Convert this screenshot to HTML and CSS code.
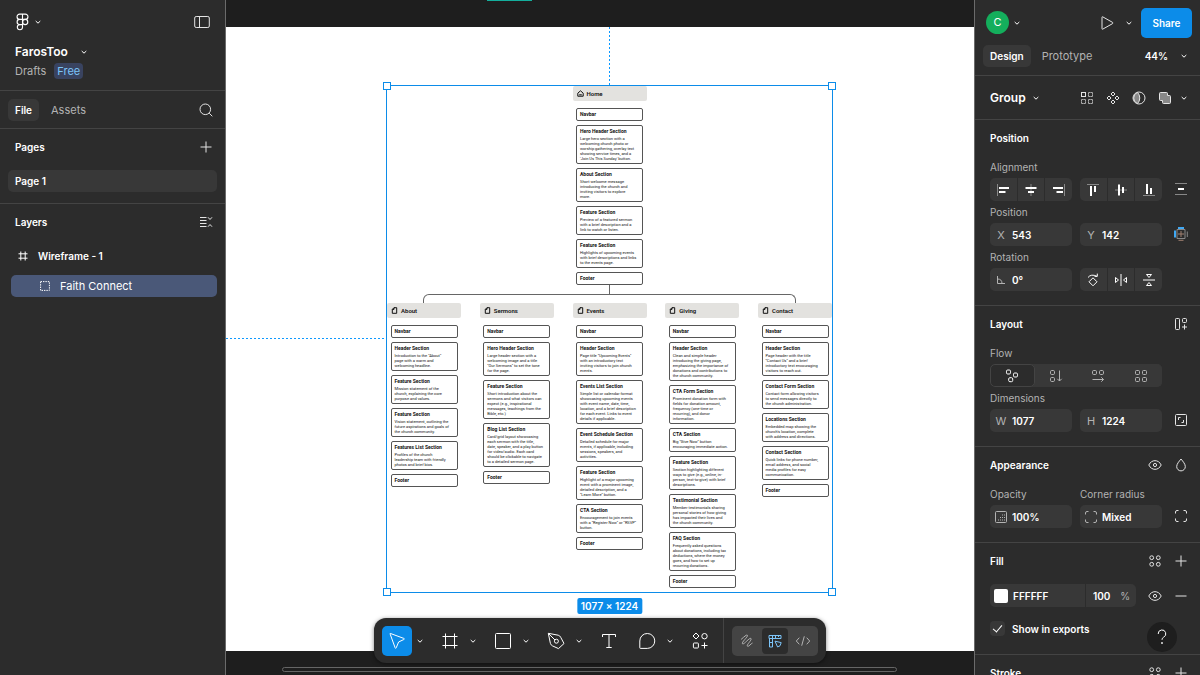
FILE: index.html
```html
<!DOCTYPE html>
<html lang="en">
<head>
<meta charset="utf-8">
<meta name="viewport" content="width=device-width, initial-scale=1">
<title>FarosToo</title>
<link rel="stylesheet" href="styles.css">
</head>
<body>

<!-- shared icons -->
<svg class="defs">
  <symbol id="chev" viewBox="0 0 8 8"><path d="M1.7 3 L4 5.2 L6.3 3" /></symbol>
  <symbol id="plus" viewBox="0 0 14 14"><path d="M7 1.5 V12.5 M1.5 7 H12.5" /></symbol>
  <symbol id="eye" viewBox="0 0 14 14"><path d="M.8 7 C3.5 1.2 10.5 1.2 13.2 7 C10.5 12.8 3.5 12.8 .8 7 Z" /><circle cx="7" cy="7" r="1.6" /></symbol>
  <symbol id="dots" viewBox="0 0 14 14"><circle cx="3.7" cy="3.7" r="1.9" /><circle cx="10.3" cy="3.7" r="1.9" /><circle cx="3.7" cy="10.3" r="1.9" /><circle cx="10.3" cy="10.3" r="1.9" /></symbol>
  <symbol id="corners" viewBox="0 0 14 14"><path d="M1.5 4.5 V3 Q1.5 1.5 3 1.5 H4.5 M9.5 1.5 H11 Q12.5 1.5 12.5 3 V4.5 M12.5 9.5 V11 Q12.5 12.5 11 12.5 H9.5 M4.5 12.5 H3 Q1.5 12.5 1.5 11 V9.5" /></symbol>
  <symbol id="page" viewBox="0 0 7 7"><path d="M3 .7 H5.7 V6.3 H1.3 V2.4 Z M3 .7 V2.4 H1.3" /></symbol>
</svg>

<div class="app">

<nav class="left">
  <div class="file_head">
    <div class="row">
      <button class="menu" aria-label="Main menu">
        <svg class="logo" viewBox="0 0 12 16"><path d="M6 1 H3.5 a2.3 2.3 0 0 0 0 4.7 H6 Z M6 1 H8.5 a2.3 2.3 0 0 1 0 4.7 H6 Z M6 5.7 H3.5 a2.3 2.3 0 0 0 0 4.6 H6 Z M3.5 10.3 a2.3 2.3 0 1 0 2.5 2.4 V10.3 Z" /><circle cx="8.4" cy="8" r="2.3" /></svg>
        <svg class="chev"><use href="#chev" /></svg>
      </button>
      <button class="ic" aria-label="Toggle panel"><svg class="i16" viewBox="0 0 16 16"><rect x=".7" y="2.5" width="14.6" height="11" rx="1.5" /><path d="M5.5 2.5 V13.5" /></svg></button>
    </div>
    <button class="file_name">FarosToo <svg class="chev"><use href="#chev" /></svg></button>
    <div class="where"><a href="#">Drafts</a><span class="badge">Free</span></div>
  </div>
  <div class="tabs">
    <button class="tab on">File</button>
    <button class="tab">Assets</button>
    <button class="ic push" aria-label="Search"><svg class="i14" viewBox="0 0 14 14"><circle cx="6.3" cy="6.3" r="5.3" /><path d="M10.2 10.2 L13.3 13.3" /></svg></button>
  </div>
  <section class="pages">
    <div class="row head">
      <h2>Pages</h2>
      <button class="ic" aria-label="Add page"><svg class="i14"><use href="#plus" /></svg></button>
    </div>
    <a class="page_row" href="#">Page 1</a>
  </section>
  <section class="layers">
    <div class="row head">
      <h2>Layers</h2>
      <button class="ic" aria-label="Collapse layers"><svg class="i14" viewBox="0 0 14 14"><path d="M1 2.5 H7.5 M1 5.5 H7.5 M1 8.5 H7.5 M1 11.5 H7.5 M9 2.3 L11 4.5 L13 2.3 M9 11.7 L11 9.5 L13 11.7" /></svg></button>
    </div>
    <a class="layer" href="#"><svg class="i10" viewBox="0 0 10 10"><path d="M2.8 .5 V9.5 M7.2 .5 V9.5 M.5 2.8 H9.5 M.5 7.2 H9.5" /></svg>Wireframe - 1</a>
    <a class="layer child" href="#"><svg class="i10" viewBox="0 0 10 10"><rect x=".6" y=".6" width="8.8" height="8.8" stroke-dasharray="1.4 1" /></svg>Faith Connect</a>
  </section>
</nav>

<main class="canvas">
  <div class="artboard"></div>
  <div class="teal"></div>
  <div class="guide_v"></div>
  <div class="guide_h"></div>

  <div class="group">
    <div class="col home">
      <h2 class="node"><svg viewBox="0 0 7 7"><path d="M.8 3.2 L3.5 .8 L6.2 3.2 V6.2 H.8 Z M2.2 4.8 H4.8" /></svg>Home</h2>
      <div class="box"><h3>Navbar</h3></div>
      <div class="box"><h3>Hero Header Section</h3><p>Large hero section with a<br>welcoming church photo or<br>worship gathering, overlay text<br>showing service times, and a<br>'Join Us This Sunday' button.</p></div>
      <div class="box"><h3>About Section</h3><p>Short welcome message<br>introducing the church and<br>inviting visitors to explore<br>more.</p></div>
      <div class="box"><h3>Feature Section</h3><p>Preview of a featured sermon<br>with a brief description and a<br>link to watch or listen.</p></div>
      <div class="box"><h3>Feature Section</h3><p>Highlights of upcoming events<br>with brief descriptions and links<br>to the events page.</p></div>
      <div class="box"><h3>Footer</h3></div>
    </div>
    <div class="stem"></div>
    <div class="branch"></div>
    <div class="cols">
      <div class="col">
        <h2 class="node"><svg><use href="#page" /></svg>About</h2>
        <div class="box"><h3>Navbar</h3></div>
        <div class="box"><h3>Header Section</h3><p>Introduction to the "About"<br>page with a warm and<br>welcoming headline.</p></div>
        <div class="box"><h3>Feature Section</h3><p>Mission statement of the<br>church, explaining the core<br>purpose and values.</p></div>
        <div class="box"><h3>Feature Section</h3><p>Vision statement, outlining the<br>future aspirations and goals of<br>the church community.</p></div>
        <div class="box"><h3>Features List Section</h3><p>Profiles of the church<br>leadership team with friendly<br>photos and brief bios.</p></div>
        <div class="box"><h3>Footer</h3></div>
      </div>
      <div class="col">
        <h2 class="node"><svg><use href="#page" /></svg>Sermons</h2>
        <div class="box"><h3>Navbar</h3></div>
        <div class="box"><h3>Hero Header Section</h3><p>Large header section with a<br>welcoming image and a title<br>"Our Sermons" to set the tone<br>for the page.</p></div>
        <div class="box"><h3>Feature Section</h3><p>Short introduction about the<br>sermons and what visitors can<br>expect (e.g., inspirational<br>messages, teachings from the<br>Bible, etc.)</p></div>
        <div class="box"><h3>Blog List Section</h3><p>Card/grid layout showcasing<br>each sermon with the title,<br>date, speaker, and a play button<br>for video/audio. Each card<br>should be clickable to navigate<br>to a detailed sermon page.</p></div>
        <div class="box"><h3>Footer</h3></div>
      </div>
      <div class="col">
        <h2 class="node"><svg><use href="#page" /></svg>Events</h2>
        <div class="box"><h3>Navbar</h3></div>
        <div class="box"><h3>Header Section</h3><p>Page title "Upcoming Events"<br>with an introductory text<br>inviting visitors to join church<br>events.</p></div>
        <div class="box"><h3>Events List Section</h3><p>Simple list or calendar format<br>showcasing upcoming events<br>with event name, date, time,<br>location, and a brief description<br>for each event. Links to event<br>details if applicable.</p></div>
        <div class="box"><h3>Event Schedule Section</h3><p>Detailed schedule for major<br>events, if applicable, including<br>sessions, speakers, and<br>activities.</p></div>
        <div class="box"><h3>Feature Section</h3><p>Highlight of a major upcoming<br>event with a prominent image,<br>detailed description, and a<br>"Learn More" button.</p></div>
        <div class="box"><h3>CTA Section</h3><p>Encouragement to join events<br>with a "Register Now" or "RSVP"<br>button.</p></div>
        <div class="box"><h3>Footer</h3></div>
      </div>
      <div class="col">
        <h2 class="node"><svg><use href="#page" /></svg>Giving</h2>
        <div class="box"><h3>Navbar</h3></div>
        <div class="box"><h3>Header Section</h3><p>Clean and simple header<br>introducing the giving page,<br>emphasizing the importance of<br>donations and contributions to<br>the church community.</p></div>
        <div class="box"><h3>CTA Form Section</h3><p>Prominent donation form with<br>fields for donation amount,<br>frequency (one-time or<br>recurring), and donor<br>information.</p></div>
        <div class="box"><h3>CTA Section</h3><p>Big "Give Now" button<br>encouraging immediate action.</p></div>
        <div class="box"><h3>Feature Section</h3><p>Section highlighting different<br>ways to give (e.g., online, in-<br>person, text-to-give) with brief<br>descriptions.</p></div>
        <div class="box"><h3>Testimonial Section</h3><p>Member testimonials sharing<br>personal stories of how giving<br>has impacted their lives and<br>the church community.</p></div>
        <div class="box"><h3>FAQ Section</h3><p>Frequently asked questions<br>about donations, including tax<br>deductions, where the money<br>goes, and how to set up<br>recurring donations.</p></div>
        <div class="box"><h3>Footer</h3></div>
      </div>
      <div class="col">
        <h2 class="node"><svg><use href="#page" /></svg>Contact</h2>
        <div class="box"><h3>Navbar</h3></div>
        <div class="box"><h3>Header Section</h3><p>Page header with the title<br>"Contact Us" and a brief<br>introductory text encouraging<br>visitors to reach out.</p></div>
        <div class="box"><h3>Contact Form Section</h3><p>Contact form allowing visitors<br>to send messages directly to<br>the church administration.</p></div>
        <div class="box"><h3>Locations Section</h3><p>Embedded map showing the<br>church's location, complete<br>with address and directions.</p></div>
        <div class="box"><h3>Contact Section</h3><p>Quick links for phone number,<br>email address, and social<br>media profiles for easy<br>communication.</p></div>
        <div class="box"><h3>Footer</h3></div>
      </div>
    </div>
    <i class="handle tl"></i><i class="handle tr"></i><i class="handle bl"></i><i class="handle br"></i>
    <span class="size">1077 × 1224</span>
  </div>

  <div class="scrollbar"></div>

  <div class="toolbar">
    <div class="tool">
      <button class="tb active" aria-label="Move"><svg viewBox="0 0 20 20"><path d="M3.2 3.2 Q2.5 2.2 3.8 2.6 L16.8 7.4 Q18 7.9 16.8 8.5 L11.6 11 L9.2 16.8 Q8.6 18 8.1 16.7 Z" /></svg></button>
      <button class="more" aria-label="Move tools"><svg class="chev"><use href="#chev" /></svg></button>
    </div>
    <div class="tool">
      <button class="tb" aria-label="Frame"><svg viewBox="0 0 20 20"><path d="M5.5 2.5 V17.5 M14.5 2.5 V17.5 M2.5 5.5 H17.5 M2.5 14.5 H17.5" /></svg></button>
      <button class="more" aria-label="Region tools"><svg class="chev"><use href="#chev" /></svg></button>
    </div>
    <div class="tool">
      <button class="tb" aria-label="Rectangle"><svg viewBox="0 0 20 20"><rect x="2.5" y="2.5" width="15" height="15" rx="1" /></svg></button>
      <button class="more" aria-label="Shape tools"><svg class="chev"><use href="#chev" /></svg></button>
    </div>
    <div class="tool">
      <button class="tb" aria-label="Pen"><svg viewBox="0 0 20 20"><path d="M2.3 2.3 L12.2 4.2 Q14 4.7 14.7 6.3 L18 12.5 L12.5 17.6 L6.5 14.9 Q4.9 14.1 4.4 12.4 Z M2.5 2.5 L9 9" /><circle cx="10.4" cy="10.2" r="2" /></svg></button>
      <button class="more" aria-label="Creation tools"><svg class="chev"><use href="#chev" /></svg></button>
    </div>
    <button class="tb" aria-label="Text"><svg viewBox="0 0 20 20"><path d="M3.5 6 V3.5 H16.5 V6 M10 3.5 V16.5 M7.3 16.5 H12.7" /></svg></button>
    <div class="tool">
      <button class="tb" aria-label="Comment"><svg viewBox="0 0 20 20"><path d="M10.3 2.5 a7.4 7.4 0 1 1 0 14.9 H3.4 Q2.8 17.4 2.8 16.8 V10 a7.4 7.4 0 0 1 7.5 -7.5 Z" /></svg></button>
      <button class="more" aria-label="Comment tools"><svg class="chev"><use href="#chev" /></svg></button>
    </div>
    <button class="tb" aria-label="Actions"><svg viewBox="0 0 20 20"><path d="M6 2 L9 5 L6 8 L3 5 Z M14.5 11.5 V17.5 M11.5 14.5 H17.5" /><circle cx="14.5" cy="5.2" r="2.7" /><rect x="3.4" y="12" width="5" height="5" rx=".8" /></svg></button>
    <div class="sep"></div>
    <div class="modes">
      <button aria-label="Draw"><svg viewBox="0 0 16 16"><path d="M2 6.5 C5 4 8 .8 8.5 2.5 C9 4 2 9.5 3.5 10.8 C5 12 10.5 4 12 5.5 C13.2 7 7 12 8.5 13.2 C9.8 14 12 10.5 13.5 10" /></svg></button>
      <button class="on" aria-label="Design"><svg viewBox="0 0 16 16"><path d="M2 2.5 H14 V5.5 H2 Z M2.5 5.5 V14 H5.5 V2.5 M8.5 2.5 V5.5 M11.5 2.5 V4 M2.5 9.5 H5.5 M8 8.2 L14.2 9.6 L13 12.8 L10.6 14 Z" /></svg></button>
      <button aria-label="Dev mode"><svg viewBox="0 0 16 16"><path d="M4.3 4.7 L1.3 8 L4.3 11.3 M11.7 4.7 L14.7 8 L11.7 11.3 M9.3 3.3 L6.7 12.7" /></svg></button>
    </div>
  </div>
</main>

<aside class="right">
  <div class="top">
    <div class="row user">
      <span class="avatar">C</span>
      <svg class="chev"><use href="#chev" /></svg>
      <button class="ic push" aria-label="Present"><svg class="i14" viewBox="0 0 14 14"><path d="M2 1.4 Q2 .4 2.8 .9 L12.6 6.4 Q13.3 7 12.6 7.6 L2.8 13.1 Q2 13.6 2 12.6 Z" /></svg></button>
      <svg class="chev"><use href="#chev" /></svg>
      <button class="share">Share</button>
    </div>
    <div class="row modes_row">
      <button class="tab on">Design</button>
      <button class="tab">Prototype</button>
      <button class="zoom push">44% <svg class="chev"><use href="#chev" /></svg></button>
    </div>
  </div>

  <div class="kind">
    <button class="kind_name">Group <svg class="chev"><use href="#chev" /></svg></button>
    <button class="ic push" aria-label="Select matching"><svg class="i14" viewBox="0 0 14 14"><rect x="1.5" y="1.5" width="4" height="4" /><path d="M8.5 1.5 H12.5 V5.5 H8.5 Z M1.5 8.5 H5.5 V12.5 H1.5 Z M8.5 8.5 H12.5 V12.5 H8.5 Z" stroke-dasharray="1.2 .8" /></svg></button>
    <button class="ic" aria-label="Create component"><svg class="i14" viewBox="0 0 14 14"><path d="M7 1 L9 3 L7 5 L5 3 Z M3 5 L5 7 L3 9 L1 7 Z M11 5 L13 7 L11 9 L9 7 Z M7 9 L9 11 L7 13 L5 11 Z" /></svg></button>
    <button class="ic" aria-label="Use as mask"><svg class="i14" viewBox="0 0 14 14"><circle cx="7" cy="7" r="6" /><path class="gray" d="M5.5 1.4 A6 6 0 0 0 5.5 12.6 A8 8 0 0 0 5.5 1.4 Z" /></svg></button>
    <button class="ic" aria-label="Boolean"><svg class="i14" viewBox="0 0 14 14"><path class="gray" d="M1.5 2.5 Q1.5 1.5 2.5 1.5 H8.5 Q9.5 1.5 9.5 2.5 V4.5 H11.5 Q12.5 4.5 12.5 5.5 V11.5 Q12.5 12.5 11.5 12.5 H5.5 Q4.5 12.5 4.5 11.5 V9.5 H2.5 Q1.5 9.5 1.5 8.5 Z" /></svg></button>
    <svg class="chev"><use href="#chev" /></svg>
  </div>

  <section class="panel">
    <div class="row head"><h2>Position</h2></div>
    <div class="fields">
      <span class="lab wide">Alignment</span>
      <div class="seg">
        <button aria-label="Align left"><svg class="i14" viewBox="0 0 14 14"><path class="dim" d="M1.5 1 V13" /><path class="bar" d="M3 5 H13 M3 9 H9.5" /></svg></button>
        <button aria-label="Align center"><svg class="i14" viewBox="0 0 14 14"><path class="dim" d="M7 1 V13" /><path class="bar" d="M1.5 5 H12.5 M4 9 H10" /></svg></button>
        <button aria-label="Align right"><svg class="i14" viewBox="0 0 14 14"><path class="dim" d="M12.5 1 V13" /><path class="bar" d="M1 5 H11 M4.5 9 H11" /></svg></button>
      </div>
      <div class="seg">
        <button aria-label="Align top"><svg class="i14" viewBox="0 0 14 14"><path class="dim" d="M1 1.5 H13" /><path class="bar" d="M5 3 V13 M9 3 V9" /></svg></button>
        <button aria-label="Align middle"><svg class="i14" viewBox="0 0 14 14"><path class="dim" d="M1 7 H13" /><path class="bar" d="M5 1.5 V12.5 M9 4 V10" /></svg></button>
        <button aria-label="Align bottom"><svg class="i14" viewBox="0 0 14 14"><path class="dim" d="M1 12.5 H13" /><path class="bar" d="M5 1 V11 M9 5 V11" /></svg></button>
      </div>
      <button class="ic" aria-label="Distribute"><svg class="i14" viewBox="0 0 14 14"><path class="dim" d="M1 1.5 H13 M1 12.5 H13" /><path class="bar" d="M4 7 H10" /></svg></button>

      <span class="lab wide">Position</span>
      <label class="field"><span>X</span><input type="text" value="543"></label>
      <label class="field"><span>Y</span><input type="text" value="142"></label>
      <button class="ic" aria-label="Constraints"><svg class="i14" viewBox="0 0 14 14"><path class="brown" d="M7 4 V10 M4 7 H10 M4.5 13.3 H9.5" /><path class="dim" d="M3 2.5 H11 V11.5 H3 Z M13.3 4.5 V10" /><path class="blue" d="M4 1 H10 M1 3.5 V10.5" /></svg></button>

      <label class="lab wide" for="rot">Rotation</label>
      <div class="field"><svg class="i14 pre" viewBox="0 0 14 14"><path d="M3.5 3 V10.5 H11 M3.5 6 Q8 6 8 10.5" /></svg><input id="rot" type="text" value="0°"></div>
      <div class="seg">
        <button aria-label="Rotate"><svg class="i14" viewBox="0 0 14 14"><path d="M7 4.8 L11 8.8 L7 12.8 L3 8.8 Z M2 4.5 Q5 .5 11 3.3 M11.3 .6 V3.4 H8.5" /></svg></button>
        <button aria-label="Flip horizontal"><svg class="i14" viewBox="0 0 14 14"><path d="M7 1 V13 M1.5 4.5 L4.5 7 L1.5 9.5 Z M12.5 4.5 L9.5 7 L12.5 9.5 Z" /></svg></button>
        <button aria-label="Flip vertical"><svg class="i14" viewBox="0 0 14 14"><path d="M1 7 H13 M4.5 1.5 H9.5 L7 4.5 Z M4.5 12.5 H9.5 L7 9.5 Z" /></svg></button>
      </div>
    </div>
  </section>

  <section class="panel">
    <div class="row head"><h2>Layout</h2>
      <button class="ic" aria-label="Add auto layout"><svg class="i14" viewBox="0 0 14 14"><rect x="1.5" y="1.5" width="4" height="11" rx=".8" /><rect x="8.5" y="1.5" width="4" height="4" rx="1" /><path d="M10.5 7.5 V12.5 M8 10 H13" /></svg></button>
    </div>
    <div class="fields">
      <span class="lab wide">Flow</span>
      <div class="seg flow">
        <button class="on" aria-label="Freeform"><svg class="i14" viewBox="0 0 14 14"><rect x="1.5" y="1" width="4" height="4" rx="1.2" /><rect x="8.5" y="4" width="4" height="4" rx="1.2" /><rect x="3.7" y="8.7" width="4" height="4" rx="1.2" /></svg></button>
        <button aria-label="Vertical"><svg class="i14" viewBox="0 0 14 14"><rect x="1.5" y="1.5" width="4" height="4" rx="1.2" /><rect x="1.5" y="8.5" width="4" height="4" rx="1.2" /><path d="M10.5 1.5 V12 M8.3 9.8 L10.5 12 L12.7 9.8" /></svg></button>
        <button aria-label="Horizontal"><svg class="i14" viewBox="0 0 14 14"><rect x="1.5" y="1.5" width="4" height="4" rx="1.2" /><rect x="8.5" y="1.5" width="4" height="4" rx="1.2" /><path d="M1.5 10.5 H12.5 M10.3 8.3 L12.5 10.5 L10.3 12.7" /></svg></button>
        <button aria-label="Grid"><svg class="i14" viewBox="0 0 14 14"><rect x="1.5" y="1.5" width="4" height="4" rx="1" /><rect x="8.5" y="1.5" width="4" height="4" rx="1" /><rect x="1.5" y="8.5" width="4" height="4" rx="1" /><rect x="8.5" y="8.5" width="4" height="4" rx="1" /></svg></button>
      </div>
      <span class="lab wide">Dimensions</span>
      <label class="field"><span>W</span><input type="text" value="1077"></label>
      <label class="field"><span>H</span><input type="text" value="1224"></label>
      <button class="ic" aria-label="Lock ratio"><svg class="i14" viewBox="0 0 14 14"><rect x="1.5" y="1.5" width="11" height="11" rx="1" /><path d="M4.5 7 V4.5 H6.5 M9.5 7 V9.5 H7.5" /></svg></button>
    </div>
  </section>

  <section class="panel">
    <div class="row head"><h2>Appearance</h2>
      <button class="ic push" aria-label="Hide"><svg class="i14"><use href="#eye" /></svg></button>
      <button class="ic" aria-label="Blend mode"><svg class="i14" viewBox="0 0 14 14"><path d="M7 1 C9 3.5 11.3 6 11.3 8.6 A4.3 4.3 0 0 1 2.7 8.6 C2.7 6 5 3.5 7 1 Z" /></svg></button>
    </div>
    <div class="fields">
      <label class="lab" for="opacity">Opacity</label>
      <label class="lab two" for="radius">Corner radius</label>
      <div class="field"><svg class="i14 pre" viewBox="0 0 14 14"><rect x="1.5" y="1.5" width="11" height="11" rx="1" /><path d="M4 10 H11 M6 7.5 H11 M8 5 H11" stroke-dasharray="1 1" /></svg><input id="opacity" type="text" value="100%"></div>
      <div class="field"><svg class="i14 pre"><use href="#corners" /></svg><input id="radius" type="text" value="Mixed"></div>
      <button class="ic" aria-label="Individual corners"><svg class="i14"><use href="#corners" /></svg></button>
    </div>
  </section>

  <section class="panel">
    <div class="row head"><h2>Fill</h2>
      <button class="ic push" aria-label="Fill styles"><svg class="i14"><use href="#dots" /></svg></button>
      <button class="ic" aria-label="Add fill"><svg class="i14"><use href="#plus" /></svg></button>
    </div>
    <div class="row paint">
      <div class="color">
        <i class="swatch"></i><input type="text" value="FFFFFF" aria-label="Fill colour">
        <label class="pct"><input type="text" value="100" aria-label="Fill opacity"><span>%</span></label>
      </div>
      <button class="ic" aria-label="Hide fill"><svg class="i14"><use href="#eye" /></svg></button>
      <button class="ic" aria-label="Remove fill"><svg class="i14" viewBox="0 0 14 14"><path d="M1.5 7 H12.5" /></svg></button>
    </div>
    <label class="check"><input type="checkbox" checked>Show in exports</label>
  </section>

  <section class="panel">
    <div class="row head"><h2>Stroke</h2>
      <button class="ic push" aria-label="Stroke styles"><svg class="i14"><use href="#dots" /></svg></button>
      <button class="ic" aria-label="Add stroke"><svg class="i14"><use href="#plus" /></svg></button>
    </div>
  </section>

  <button class="help" aria-label="Help"><svg viewBox="0 0 14 16"><path d="M3.2 5 A3.8 3.8 0 1 1 8.6 8.2 Q7 9 7 10.8" /><circle class="dot" cx="7" cy="14" r=".5" /></svg></button>
</aside>

</div>
</body>
</html>
```

FILE: styles.css
```css
* {
  box-sizing: border-box;
}
body {
  margin: 0;
  background: #1e1e1e;
  color: #fff;
  font: 600 10px/16px Inter, sans-serif;
}
h2, h3, p {
  margin: 0;
}
h2 {
  font-size: 10px;
  font-weight: 600;
}
a {
  color: inherit;
  text-decoration: none;
}
button {
  display: flex;
  align-items: center;
  justify-content: center;
  margin: 0;
  padding: 0;
  border: 0;
  background: none;
  color: inherit;
  font: inherit;
}
input {
  flex: 1;
  width: 100%;
  min-width: 0;
  padding: 0;
  border: 0;
  background: none;
  color: inherit;
  font: inherit;
}
svg {
  flex: none;
  fill: none;
  stroke: currentColor;
  stroke-width: 1;
}
.defs {
  position: absolute;
  width: 0;
  height: 0;
}
.chev { width: 8px; height: 8px; }
.i10 { width: 10px; height: 10px; }
.i14 { width: 14px; height: 14px; }
.i16 { width: 16px; height: 16px; }

.app {
  display: grid;
  grid-template-columns: 226px 1fr 226px;
  height: 100vh;
  overflow: hidden;
}
.row {
  display: flex;
  align-items: center;
  justify-content: space-between;
}
.ic {
  width: 22px;
  height: 22px;
  color: #e4e4e4;
}
.push {
  margin-left: auto;
}
.tab {
  height: 22px;
  padding: 0 7px;
  border-radius: 5px;
  color: #b3b3b3;
  font-size: 11px;
  font-weight: 400;
}
.tab.on {
  background: #383838;
  color: #fff;
  font-size: 10px;
  font-weight: 600;
}

/* left panel */
.left {
  background: #2c2c2c;
  border-right: 1px solid #6b6b6b;
}
.file_head {
  height: 91px;
  padding: 11px 12px 0 15px;
  border-bottom: 1px solid #444;
}
.menu {
  gap: 4px;
}
.logo {
  width: 15px;
  height: 18px;
}
.file_name {
  gap: 12px;
  height: 16px;
  margin-top: 11px;
  font-size: 12px;
}
.where {
  display: flex;
  align-items: center;
  gap: 8px;
  margin-top: 3px;
  color: #b3b3b3;
  font-size: 11px;
  font-weight: 400;
}
.badge {
  padding: 0 3px;
  border-radius: 4px;
  background: #394360;
  color: #7cc4f8;
}
.tabs {
  display: flex;
  align-items: center;
  gap: 5px;
  height: 38px;
  padding: 0 8px;
  border-bottom: 1px solid #444;
}
.head {
  height: 36px;
}
.pages {
  height: 75px;
  padding: 0 8px;
  border-bottom: 1px solid #444;
}
.pages .head, .layers .head {
  padding: 0 0 0 7px;
}
.page_row {
  display: block;
  height: 22px;
  margin-top: 5px;
  padding: 0 7px;
  border-radius: 5px;
  background: #383838;
  line-height: 22px;
}
.layers {
  padding: 0 8px;
}
.layer {
  display: flex;
  align-items: center;
  gap: 10px;
  height: 22px;
  margin: 5px 0 8px 3px;
  padding-left: 7px;
  border-radius: 5px;
}
.layer.child {
  padding-left: 29px;
  background: #4a5878;
  font-size: 11px;
  font-weight: 400;
}

/* canvas */
.canvas {
  position: relative;
  overflow: hidden;
  background: #1e1e1e;
}
.artboard {
  position: absolute;
  inset: 27px 0 24px;
  background: #fff;
}
.teal {
  position: absolute;
  left: 261px;
  top: 0;
  width: 45px;
  height: 1px;
  background: #14ae9c;
}
.guide_v {
  position: absolute;
  left: 383px;
  top: 27px;
  width: 1px;
  height: 58px;
  background: repeating-linear-gradient(#0d99ff 0 2px, #fff 2px 4px);
}
.guide_h {
  position: absolute;
  left: 0;
  top: 338px;
  width: 160px;
  height: 1px;
  background: repeating-linear-gradient(90deg, #0d99ff 0 2px, #fff 2px 4px);
}
.group {
  position: absolute;
  left: 160px;
  top: 85px;
  width: 447px;
  height: 508px;
  border: 1px solid #0c8ce9;
  color: #111;
  font-family: Roboto, sans-serif;
  white-space: nowrap;
}
.cols {
  display: flex;
  justify-content: space-between;
  align-items: flex-start;
}
.col {
  display: flex;
  flex-direction: column;
  align-items: center;
  gap: 4px;
  width: 74px;
}
.home {
  margin: 0 auto;
}
.node {
  display: flex;
  align-items: center;
  gap: 3px;
  width: 74px;
  height: 15px;
  margin-bottom: 3px;
  padding-left: 4px;
  border-radius: 2px;
  background: #e3e2df;
  font-size: 6px;
  line-height: 14px;
}
.node svg {
  width: 7px;
  height: 7px;
}
.box {
  width: 67px;
  padding: 2px 3px;
  border: 1px solid #555;
  border-radius: 2px;
}
.box h3 {
  font-size: 5px;
  font-weight: 700;
  line-height: 7px;
}
.box p {
  padding-top: 1px;
  font-size: 4px;
  font-weight: 400;
  line-height: 5px;
}
.stem {
  width: 1px;
  height: 9px;
  margin: 0 auto;
  background: #666;
}
.branch {
  height: 9px;
  margin: 0 36px;
  border: 1px solid #666;
  border-bottom: 0;
  border-radius: 6px 6px 0 0;
}
.handle {
  position: absolute;
  width: 8px;
  height: 8px;
  border: 1px solid #0c8ce9;
  background: #fff;
}
.tl, .tr { top: -4px; }
.bl, .br { bottom: -4px; }
.tl, .bl { left: -4px; }
.tr, .br { right: -4px; }
.size {
  position: absolute;
  left: 50%;
  top: 100%;
  margin-top: 6px;
  padding: 0 4px;
  border-radius: 2px;
  background: #0c8ce9;
  color: #fff;
  font: 600 10px/16px Inter, sans-serif;
  transform: translateX(-50%);
}
.scrollbar {
  position: absolute;
  left: 56px;
  right: 77px;
  bottom: 3px;
  height: 5px;
  border: 1px solid #666;
  border-radius: 3px;
}
.toolbar {
  position: absolute;
  left: 50%;
  bottom: 12px;
  display: flex;
  align-items: center;
  gap: 8px;
  height: 45px;
  padding: 0 8px;
  border-radius: 12px;
  background: #2c2c2c;
  box-shadow: 0 1px 4px rgba(0,0,0,.5);
  transform: translateX(-50%);
}
.tool {
  display: flex;
}
.tb {
  width: 30px;
  height: 30px;
  border-radius: 5px;
}
.tb.active {
  background: #0c8ce9;
}
.tb svg {
  width: 20px;
  height: 20px;
}
.more {
  width: 15px;
}
.sep {
  align-self: stretch;
  width: 1px;
  background: #444;
}
.modes {
  display: flex;
  align-items: center;
  gap: 2px;
  height: 30px;
  padding: 0 2px;
  border-radius: 5px;
  background: #444;
  color: #b3b3b3;
}
.modes button {
  width: 26px;
  height: 26px;
  border-radius: 4px;
}
.modes svg {
  width: 16px;
  height: 16px;
}
.modes .on {
  background: #2c2c2c;
  color: #7cc4f8;
}

/* right panel */
.right {
  position: relative;
  overflow: hidden;
  border-left: 1px solid #6b6b6b;
  background: #2c2c2c;
}
.top {
  height: 76px;
  padding: 7px 8px 0;
  border-bottom: 1px solid #444;
}
.user {
  gap: 4px;
  height: 31px;
  padding-left: 3px;
}
.user .ic {
  margin-right: 3px;
}
.avatar {
  width: 23px;
  height: 23px;
  border-radius: 50%;
  background: #14ae5c;
  font-size: 11px;
  font-weight: 400;
  line-height: 23px;
  text-align: center;
}
.share {
  width: 51px;
  height: 30px;
  margin-left: 4px;
  border-radius: 5px;
  background: #0c8ce9;
}
.modes_row {
  gap: 4px;
  margin-top: 7px;
}
.zoom {
  gap: 12px;
  padding-right: 4px;
}
.kind {
  display: flex;
  align-items: center;
  gap: 4px;
  height: 44px;
  padding: 0 12px 0 15px;
  border-bottom: 1px solid #444;
}
.kind_name {
  gap: 6px;
  font-size: 12px;
}
.gray {
  fill: #888;
}
.panel {
  padding: 0 8px 14px 15px;
  border-bottom: 1px solid #444;
}
.panel .head {
  gap: 4px;
}
.fields {
  display: grid;
  grid-template-columns: 1fr 1fr 22px;
  column-gap: 8px;
}
.lab {
  color: #b3b3b3;
  font-weight: 400;
  line-height: 22px;
}
.wide {
  grid-column: 1 / -1;
}
.two {
  grid-column: 2 / -1;
}
.field {
  display: flex;
  align-items: center;
  gap: 4px;
  min-width: 0;
  height: 23px;
  padding: 0 4px;
  border-radius: 5px;
  background: #383838;
}
.field span {
  width: 14px;
  color: #b3b3b3;
  font-size: 11px;
  font-weight: 400;
  text-align: center;
}
.pre {
  color: #b3b3b3;
}
.seg {
  display: flex;
  gap: 1px;
  height: 23px;
  overflow: hidden;
  border-radius: 5px;
}
.seg button {
  flex: 1;
  background: #383838;
}
.flow {
  grid-column: 1 / 3;
  gap: 0;
  background: #383838;
  color: #b3b3b3;
}
.flow .on {
  border: 1px solid #444;
  border-radius: 5px;
  background: #2c2c2c;
  color: #fff;
}
.dim {
  stroke: #888;
}
.bar {
  stroke: #fff;
  stroke-width: 2;
}
.brown {
  stroke: #a08070;
}
.blue {
  stroke: #3fa9f5;
  stroke-width: 2;
}
.paint {
  gap: 4px;
  margin-top: 5px;
}
.color {
  display: flex;
  flex: 1;
  align-items: center;
  gap: 5px;
  min-width: 0;
  height: 23px;
  margin-right: 4px;
  padding-left: 4px;
  border-radius: 5px;
  background: #383838;
}
.swatch {
  width: 14px;
  height: 14px;
  border-radius: 2px;
  background: #fff;
}
.pct {
  display: flex;
  align-items: center;
  width: 51px;
  height: 23px;
  padding: 0 6px 0 7px;
  border-left: 1px solid #2c2c2c;
}
.pct span {
  color: #b3b3b3;
  font-weight: 400;
}
.check {
  display: flex;
  align-items: center;
  gap: 7px;
  height: 23px;
  margin-top: 10px;
}
.check input {
  display: grid;
  flex: none;
  place-items: center;
  width: 15px;
  height: 15px;
  margin: 0;
  border-radius: 4px;
  background: #383838;
  appearance: none;
}
.check input:checked::before {
  content: "";
  width: 4px;
  height: 8px;
  margin-bottom: 2px;
  border: solid #fff;
  border-width: 0 1px 1px 0;
  transform: rotate(40deg);
}
.help {
  position: absolute;
  right: 23px;
  bottom: 23px;
  width: 30px;
  height: 30px;
  border-radius: 50%;
  background: #1e1e1e;
}
.help svg {
  width: 14px;
  height: 16px;
}
.dot {
  fill: #fff;
}
```
